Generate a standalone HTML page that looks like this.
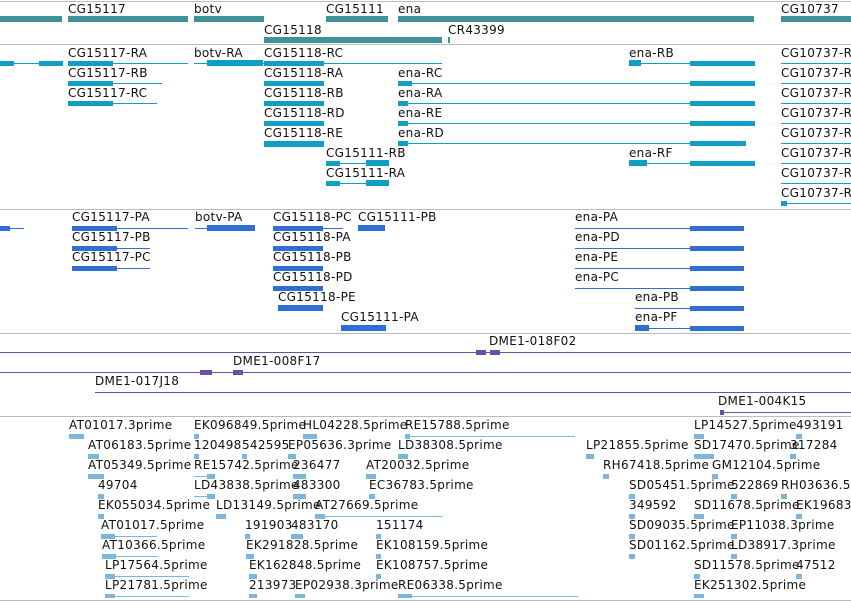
<!DOCTYPE html>
<html><head><meta charset="utf-8"><style>
body{margin:0;width:851px;height:601px;overflow:hidden;background:#fff;position:relative;font-family:"DejaVu Sans","Liberation Sans",sans-serif}
div{position:absolute}
.l{font-size:12px;line-height:14px;color:#111;white-space:nowrap;letter-spacing:0.3px}
.s{height:1px;background:#bbb;left:0;width:851px}
.g{background:#3f9297;height:6px}
.t{background:#0f9fc2}
.p{background:#2f6ed4}
.u{background:#6b4fa6}
.e{background:#7ab6de}
</style></head><body>
<div class="s" style="top:1px"></div>
<div class="s" style="top:44px"></div>
<div class="s" style="top:209px"></div>
<div class="s" style="top:333px"></div>
<div class="s" style="top:416px"></div>
<div class="s" style="top:600px"></div>

<div class="l" style="left:68px;top:2px">CG15117</div>
<div class="l" style="left:194px;top:2px">botv</div>
<div class="l" style="left:326px;top:2px">CG15111</div>
<div class="l" style="left:398px;top:2px">ena</div>
<div class="l" style="left:781px;top:2px">CG10737</div>
<div class="g" style="left:0;top:16px;width:62px"></div>
<div class="g" style="left:68px;top:16px;width:120px"></div>
<div class="g" style="left:194px;top:16px;width:70px"></div>
<div class="g" style="left:326px;top:16px;width:62px"></div>
<div class="g" style="left:398px;top:16px;width:356px"></div>
<div class="g" style="left:781px;top:16px;width:70px"></div>
<div class="l" style="left:264px;top:23px">CG15118</div>
<div class="l" style="left:448px;top:23px">CR43399</div>
<div class="g" style="left:264px;top:37px;width:178px"></div>
<div class="g" style="left:448px;top:37px;width:2px"></div>

<div class="l" style="left:68px;top:46px">CG15117-RA</div>
<div class="l" style="left:194px;top:46px">botv-RA</div>
<div class="l" style="left:264px;top:46px">CG15118-RC</div>
<div class="l" style="left:629px;top:46px">ena-RB</div>
<div class="l" style="left:68px;top:66px">CG15117-RB</div>
<div class="l" style="left:264px;top:66px">CG15118-RA</div>
<div class="l" style="left:398px;top:66px">ena-RC</div>
<div class="l" style="left:68px;top:86px">CG15117-RC</div>
<div class="l" style="left:264px;top:86px">CG15118-RB</div>
<div class="l" style="left:398px;top:86px">ena-RA</div>
<div class="l" style="left:264px;top:106px">CG15118-RD</div>
<div class="l" style="left:398px;top:106px">ena-RE</div>
<div class="l" style="left:264px;top:126px">CG15118-RE</div>
<div class="l" style="left:398px;top:126px">ena-RD</div>
<div class="l" style="left:326px;top:146px">CG15111-RB</div>
<div class="l" style="left:629px;top:146px">ena-RF</div>
<div class="l" style="left:326px;top:166px">CG15111-RA</div>
<div class="l" style="left:781px;top:46px">CG10737-R</div>
<div class="l" style="left:781px;top:66px">CG10737-R</div>
<div class="l" style="left:781px;top:86px">CG10737-R</div>
<div class="l" style="left:781px;top:106px">CG10737-R</div>
<div class="l" style="left:781px;top:126px">CG10737-R</div>
<div class="l" style="left:781px;top:146px">CG10737-R</div>
<div class="l" style="left:781px;top:166px">CG10737-R</div>
<div class="l" style="left:781px;top:186px">CG10737-R</div>
<div class="t" style="left:0;top:63px;width:62px;height:1px"></div>
<div class="t" style="left:0;top:61px;width:14px;height:5px"></div>
<div class="t" style="left:39px;top:61px;width:24px;height:5px"></div>
<div class="t" style="left:68px;top:63px;width:120px;height:1px"></div>
<div class="t" style="left:68px;top:61px;width:45px;height:5px"></div>
<div class="t" style="left:194px;top:63px;width:70px;height:1px"></div>
<div class="t" style="left:207px;top:60px;width:56px;height:6px"></div>
<div class="t" style="left:264px;top:63px;width:178px;height:1px"></div>
<div class="t" style="left:264px;top:61px;width:60px;height:5px"></div>
<div class="t" style="left:629px;top:63px;width:126px;height:1px"></div>
<div class="t" style="left:629px;top:60px;width:12px;height:6px"></div>
<div class="t" style="left:690px;top:61px;width:65px;height:5px"></div>
<div class="t" style="left:68px;top:83px;width:94px;height:1px"></div>
<div class="t" style="left:68px;top:81px;width:45px;height:5px"></div>
<div class="t" style="left:68px;top:103px;width:89px;height:1px"></div>
<div class="t" style="left:68px;top:101px;width:45px;height:5px"></div>
<div class="t" style="left:264px;top:81px;width:60px;height:5px"></div>
<div class="t" style="left:264px;top:101px;width:60px;height:5px"></div>
<div class="t" style="left:264px;top:121px;width:60px;height:5px"></div>
<div class="t" style="left:264px;top:141px;width:60px;height:6px"></div>
<div class="t" style="left:398px;top:83px;width:357px;height:1px"></div>
<div class="t" style="left:398px;top:103px;width:357px;height:1px"></div>
<div class="t" style="left:398px;top:123px;width:357px;height:1px"></div>
<div class="t" style="left:398px;top:143px;width:348px;height:1px"></div>
<div class="t" style="left:398px;top:81px;width:14px;height:5px"></div>
<div class="t" style="left:398px;top:101px;width:10px;height:5px"></div>
<div class="t" style="left:398px;top:121px;width:10px;height:5px"></div>
<div class="t" style="left:398px;top:141px;width:10px;height:5px"></div>
<div class="t" style="left:690px;top:81px;width:65px;height:5px"></div>
<div class="t" style="left:690px;top:101px;width:65px;height:5px"></div>
<div class="t" style="left:690px;top:121px;width:65px;height:5px"></div>
<div class="t" style="left:690px;top:141px;width:56px;height:5px"></div>
<div class="t" style="left:629px;top:163px;width:126px;height:1px"></div>
<div class="t" style="left:629px;top:160px;width:18px;height:6px"></div>
<div class="t" style="left:690px;top:161px;width:65px;height:5px"></div>
<div class="t" style="left:326px;top:163px;width:63px;height:1px"></div>
<div class="t" style="left:326px;top:161px;width:14px;height:5px"></div>
<div class="t" style="left:366px;top:160px;width:23px;height:6px"></div>
<div class="t" style="left:326px;top:183px;width:63px;height:1px"></div>
<div class="t" style="left:326px;top:181px;width:14px;height:5px"></div>
<div class="t" style="left:366px;top:180px;width:23px;height:6px"></div>
<div class="t" style="left:781px;top:63px;width:70px;height:1px"></div>
<div class="t" style="left:781px;top:83px;width:70px;height:1px"></div>
<div class="t" style="left:781px;top:103px;width:70px;height:1px"></div>
<div class="t" style="left:781px;top:123px;width:70px;height:1px"></div>
<div class="t" style="left:781px;top:143px;width:70px;height:1px"></div>
<div class="t" style="left:781px;top:163px;width:70px;height:1px"></div>
<div class="t" style="left:781px;top:183px;width:70px;height:1px"></div>
<div class="t" style="left:781px;top:203px;width:70px;height:1px"></div>
<div class="t" style="left:781px;top:201px;width:6px;height:5px"></div>

<div class="l" style="left:72px;top:210px">CG15117-PA</div>
<div class="l" style="left:195px;top:210px">botv-PA</div>
<div class="l" style="left:273px;top:210px">CG15118-PC</div>
<div class="l" style="left:358px;top:210px">CG15111-PB</div>
<div class="l" style="left:575px;top:210px">ena-PA</div>
<div class="l" style="left:72px;top:230px">CG15117-PB</div>
<div class="l" style="left:273px;top:230px">CG15118-PA</div>
<div class="l" style="left:575px;top:230px">ena-PD</div>
<div class="l" style="left:72px;top:250px">CG15117-PC</div>
<div class="l" style="left:273px;top:250px">CG15118-PB</div>
<div class="l" style="left:575px;top:250px">ena-PE</div>
<div class="l" style="left:273px;top:270px">CG15118-PD</div>
<div class="l" style="left:575px;top:270px">ena-PC</div>
<div class="l" style="left:278px;top:290px">CG15118-PE</div>
<div class="l" style="left:635px;top:290px">ena-PB</div>
<div class="l" style="left:341px;top:310px">CG15111-PA</div>
<div class="l" style="left:635px;top:310px">ena-PF</div>
<div class="p" style="left:0;top:228px;width:24px;height:1px"></div>
<div class="p" style="left:0;top:226px;width:10px;height:5px"></div>
<div class="p" style="left:72px;top:228px;width:116px;height:1px"></div>
<div class="p" style="left:72px;top:226px;width:45px;height:5px"></div>
<div class="p" style="left:195px;top:228px;width:60px;height:1px"></div>
<div class="p" style="left:207px;top:225px;width:48px;height:6px"></div>
<div class="p" style="left:273px;top:228px;width:70px;height:1px"></div>
<div class="p" style="left:273px;top:226px;width:50px;height:5px"></div>
<div class="p" style="left:358px;top:225px;width:27px;height:6px"></div>
<div class="p" style="left:72px;top:248px;width:78px;height:1px"></div>
<div class="p" style="left:72px;top:246px;width:45px;height:5px"></div>
<div class="p" style="left:72px;top:268px;width:78px;height:1px"></div>
<div class="p" style="left:72px;top:266px;width:45px;height:5px"></div>
<div class="p" style="left:273px;top:246px;width:50px;height:5px"></div>
<div class="p" style="left:273px;top:266px;width:50px;height:5px"></div>
<div class="p" style="left:273px;top:286px;width:50px;height:5px"></div>
<div class="p" style="left:278px;top:305px;width:45px;height:6px"></div>
<div class="p" style="left:341px;top:325px;width:45px;height:6px"></div>
<div class="p" style="left:575px;top:228px;width:169px;height:1px"></div>
<div class="p" style="left:575px;top:248px;width:169px;height:1px"></div>
<div class="p" style="left:575px;top:268px;width:169px;height:1px"></div>
<div class="p" style="left:575px;top:288px;width:169px;height:1px"></div>
<div class="p" style="left:635px;top:308px;width:109px;height:1px"></div>
<div class="p" style="left:635px;top:328px;width:109px;height:1px"></div>
<div class="p" style="left:690px;top:226px;width:54px;height:5px"></div>
<div class="p" style="left:690px;top:246px;width:54px;height:5px"></div>
<div class="p" style="left:690px;top:266px;width:54px;height:5px"></div>
<div class="p" style="left:690px;top:286px;width:54px;height:5px"></div>
<div class="p" style="left:690px;top:306px;width:54px;height:5px"></div>
<div class="p" style="left:690px;top:326px;width:54px;height:5px"></div>
<div class="p" style="left:635px;top:325px;width:14px;height:6px"></div>

<div class="l" style="left:489px;top:334px">DME1-018F02</div>
<div class="l" style="left:233px;top:354px">DME1-008F17</div>
<div class="l" style="left:95px;top:374px">DME1-017J18</div>
<div class="l" style="left:718px;top:394px">DME1-004K15</div>
<div class="u" style="left:0;top:352px;width:851px;height:1px"></div>
<div class="u" style="left:476px;top:350px;width:10px;height:5px"></div>
<div class="u" style="left:490px;top:350px;width:10px;height:5px"></div>
<div class="u" style="left:0;top:372px;width:851px;height:1px"></div>
<div class="u" style="left:200px;top:370px;width:12px;height:5px"></div>
<div class="u" style="left:233px;top:370px;width:10px;height:5px"></div>
<div class="u" style="left:95px;top:392px;width:756px;height:1px"></div>
<div class="u" style="left:720px;top:412px;width:131px;height:1px"></div>
<div class="u" style="left:720px;top:410px;width:4px;height:5px"></div>

<div class="l" style="left:69px;top:418px">AT01017.3prime</div>
<div class="l" style="left:194px;top:418px">EK096849.5prime</div>
<div class="l" style="left:303px;top:418px">HL04228.5prime</div>
<div class="l" style="left:405px;top:418px">RE15788.5prime</div>
<div class="l" style="left:694px;top:418px">LP14527.5prime</div>
<div class="l" style="left:796px;top:418px">493191</div>
<div class="l" style="left:88px;top:438px">AT06183.5prime</div>
<div class="l" style="left:194px;top:438px">120498</div>
<div class="l" style="left:242px;top:438px">542595</div>
<div class="l" style="left:288px;top:438px">EP05636.3prime</div>
<div class="l" style="left:398px;top:438px">LD38308.5prime</div>
<div class="l" style="left:586px;top:438px">LP21855.5prime</div>
<div class="l" style="left:694px;top:438px">SD17470.5prime</div>
<div class="l" style="left:790px;top:438px">317284</div>
<div class="l" style="left:88px;top:458px">AT05349.5prime</div>
<div class="l" style="left:194px;top:458px">RE15742.5prime</div>
<div class="l" style="left:293px;top:458px">236477</div>
<div class="l" style="left:366px;top:458px">AT20032.5prime</div>
<div class="l" style="left:603px;top:458px">RH67418.5prime</div>
<div class="l" style="left:712px;top:458px">GM12104.5prime</div>
<div class="l" style="left:98px;top:478px">49704</div>
<div class="l" style="left:194px;top:478px">LD43838.5prime</div>
<div class="l" style="left:293px;top:478px">483300</div>
<div class="l" style="left:369px;top:478px">EC36783.5prime</div>
<div class="l" style="left:629px;top:478px">SD05451.5prime</div>
<div class="l" style="left:731px;top:478px">522869</div>
<div class="l" style="left:781px;top:478px">RH03636.5</div>
<div class="l" style="left:98px;top:498px">EK055034.5prime</div>
<div class="l" style="left:216px;top:498px">LD13149.5prime</div>
<div class="l" style="left:315px;top:498px">AT27669.5prime</div>
<div class="l" style="left:629px;top:498px">349592</div>
<div class="l" style="left:694px;top:498px">SD11678.5prime</div>
<div class="l" style="left:796px;top:498px">EK19683</div>
<div class="l" style="left:101px;top:518px">AT01017.5prime</div>
<div class="l" style="left:245px;top:518px">191903</div>
<div class="l" style="left:291px;top:518px">483170</div>
<div class="l" style="left:376px;top:518px">151174</div>
<div class="l" style="left:629px;top:518px">SD09035.5prime</div>
<div class="l" style="left:731px;top:518px">EP11038.3prime</div>
<div class="l" style="left:102px;top:538px">AT10366.5prime</div>
<div class="l" style="left:246px;top:538px">EK291828.5prime</div>
<div class="l" style="left:376px;top:538px">EK108159.5prime</div>
<div class="l" style="left:629px;top:538px">SD01162.5prime</div>
<div class="l" style="left:731px;top:538px">LD38917.3prime</div>
<div class="l" style="left:105px;top:558px">LP17564.5prime</div>
<div class="l" style="left:249px;top:558px">EK162848.5prime</div>
<div class="l" style="left:376px;top:558px">EK108757.5prime</div>
<div class="l" style="left:694px;top:558px">SD11578.5prime</div>
<div class="l" style="left:796px;top:558px">47512</div>
<div class="l" style="left:105px;top:578px">LP21781.5prime</div>
<div class="l" style="left:249px;top:578px">213973</div>
<div class="l" style="left:295px;top:578px">EP02938.3prime</div>
<div class="l" style="left:398px;top:578px">RE06338.5prime</div>
<div class="l" style="left:694px;top:578px">EK251302.5prime</div>
<div class="e" style="left:69px;top:434px;width:15px;height:5px"></div>
<div class="e" style="left:194px;top:434px;width:5px;height:5px"></div>
<div class="e" style="left:303px;top:434px;width:14px;height:5px"></div>
<div class="e" style="left:405px;top:436px;width:170px;height:1px"></div>
<div class="e" style="left:405px;top:434px;width:5px;height:5px"></div>
<div class="e" style="left:694px;top:434px;width:10px;height:5px"></div>
<div class="e" style="left:796px;top:434px;width:6px;height:5px"></div>
<div class="e" style="left:88px;top:454px;width:11px;height:5px"></div>
<div class="e" style="left:194px;top:454px;width:5px;height:5px"></div>
<div class="e" style="left:242px;top:454px;width:5px;height:5px"></div>
<div class="e" style="left:288px;top:454px;width:8px;height:5px"></div>
<div class="e" style="left:398px;top:454px;width:10px;height:5px"></div>
<div class="e" style="left:586px;top:454px;width:8px;height:5px"></div>
<div class="e" style="left:694px;top:454px;width:20px;height:5px"></div>
<div class="e" style="left:790px;top:454px;width:6px;height:5px"></div>
<div class="e" style="left:88px;top:474px;width:16px;height:5px"></div>
<div class="e" style="left:194px;top:476px;width:20px;height:1px"></div>
<div class="e" style="left:207px;top:474px;width:8px;height:5px"></div>
<div class="e" style="left:293px;top:474px;width:13px;height:5px"></div>
<div class="e" style="left:366px;top:474px;width:10px;height:5px"></div>
<div class="e" style="left:603px;top:474px;width:6px;height:5px"></div>
<div class="e" style="left:712px;top:474px;width:6px;height:5px"></div>
<div class="e" style="left:98px;top:494px;width:6px;height:5px"></div>
<div class="e" style="left:194px;top:496px;width:20px;height:1px"></div>
<div class="e" style="left:207px;top:494px;width:8px;height:5px"></div>
<div class="e" style="left:293px;top:494px;width:13px;height:5px"></div>
<div class="e" style="left:369px;top:494px;width:6px;height:5px"></div>
<div class="e" style="left:629px;top:494px;width:6px;height:5px"></div>
<div class="e" style="left:731px;top:494px;width:6px;height:5px"></div>
<div class="e" style="left:781px;top:494px;width:6px;height:5px"></div>
<div class="e" style="left:98px;top:514px;width:6px;height:5px"></div>
<div class="e" style="left:216px;top:514px;width:10px;height:5px"></div>
<div class="e" style="left:315px;top:516px;width:127px;height:1px"></div>
<div class="e" style="left:315px;top:514px;width:10px;height:5px"></div>
<div class="e" style="left:629px;top:514px;width:6px;height:5px"></div>
<div class="e" style="left:694px;top:514px;width:10px;height:5px"></div>
<div class="e" style="left:796px;top:514px;width:6px;height:5px"></div>
<div class="e" style="left:101px;top:536px;width:56px;height:1px"></div>
<div class="e" style="left:101px;top:534px;width:14px;height:5px"></div>
<div class="e" style="left:245px;top:534px;width:5px;height:5px"></div>
<div class="e" style="left:291px;top:534px;width:12px;height:5px"></div>
<div class="e" style="left:376px;top:534px;width:5px;height:5px"></div>
<div class="e" style="left:629px;top:534px;width:6px;height:5px"></div>
<div class="e" style="left:731px;top:534px;width:6px;height:5px"></div>
<div class="e" style="left:102px;top:556px;width:56px;height:1px"></div>
<div class="e" style="left:102px;top:554px;width:14px;height:5px"></div>
<div class="e" style="left:246px;top:554px;width:8px;height:5px"></div>
<div class="e" style="left:376px;top:554px;width:5px;height:5px"></div>
<div class="e" style="left:629px;top:554px;width:6px;height:5px"></div>
<div class="e" style="left:731px;top:554px;width:6px;height:5px"></div>
<div class="e" style="left:105px;top:576px;width:84px;height:1px"></div>
<div class="e" style="left:105px;top:574px;width:10px;height:5px"></div>
<div class="e" style="left:249px;top:574px;width:8px;height:5px"></div>
<div class="e" style="left:376px;top:574px;width:5px;height:5px"></div>
<div class="e" style="left:694px;top:574px;width:6px;height:5px"></div>
<div class="e" style="left:796px;top:574px;width:6px;height:5px"></div>
<div class="e" style="left:105px;top:596px;width:84px;height:1px"></div>
<div class="e" style="left:105px;top:594px;width:10px;height:4px"></div>
<div class="e" style="left:249px;top:594px;width:8px;height:4px"></div>
<div class="e" style="left:295px;top:594px;width:10px;height:4px"></div>
<div class="e" style="left:398px;top:596px;width:180px;height:1px"></div>
<div class="e" style="left:398px;top:594px;width:14px;height:4px"></div>
<div class="e" style="left:694px;top:594px;width:10px;height:4px"></div>
</body></html>
